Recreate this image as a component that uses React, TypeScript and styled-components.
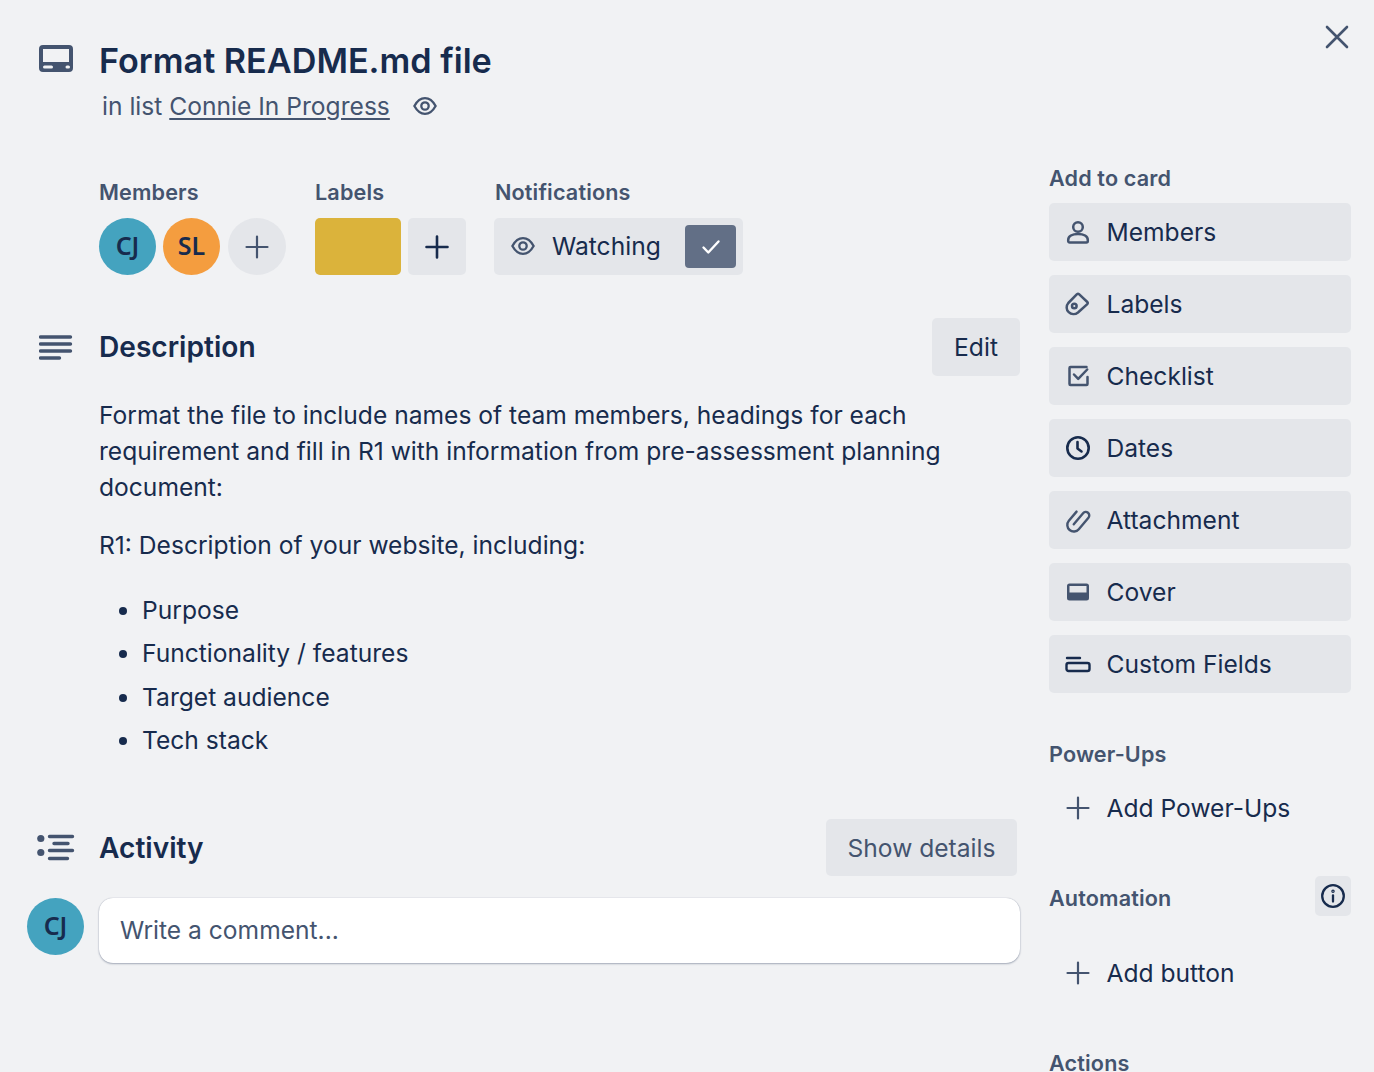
import React from 'react'
import styled, { createGlobalStyle } from 'styled-components'

const GlobalStyle = createGlobalStyle`
  html, body {
    margin: 0;
    height: 1072px;
    overflow: hidden;
    background: #f1f2f4;
  }
  body {
    font-family: Inter, "Noto Sans", sans-serif;
    color: #172b4d;
    -webkit-font-smoothing: antialiased;
  }
`

const Card = styled.div`
  position: relative;
  display: flex;
  height: 1072px;
  overflow: hidden;
`

const Main = styled.main`
  width: 1020px;
  flex: none;
  padding-top: 40px;
`

const Sidebar = styled.aside`
  width: 302px;
  flex: none;
  margin-left: 29px;
  padding-top: 166px;
`

const CloseButton = styled.button`
  position: absolute;
  top: 24px;
  right: 24px;
  width: 26px;
  height: 26px;
  padding: 0;
  border: 0;
  background: none;
  color: #44546f;
  display: flex;
`

const TitleRow = styled.div`
  display: flex;
  align-items: center;
  height: 40px;
  padding-left: 39px;
  gap: 26px;
`

const TitleIcon = styled.span`
  display: flex;
  margin-top: -4px;
`

const Title = styled.h1`
  margin: 0;
  padding-top: 1px;
  font-size: 34.2px;
  line-height: 40px;
  font-weight: 600;
  color: #172b4d;
`

const SubTitle = styled.div`
  display: flex;
  align-items: center;
  height: 36px;
  margin-top: 8px;
  padding-left: 102px;
  font-size: 24.6px;
  color: #44546f;
  gap: 23px;
`

const ListLink = styled.a`
  color: #44546f;
  text-decoration: underline;
  text-underline-offset: 3px;
`

const Meta = styled.div`
  display: flex;
  margin-top: 56px;
  padding-left: 99px;
`

const MetaGroup = styled.div<{ $width: number }>`
  width: ${({ $width }) => $width}px;
  flex: none;
`

const SmallHeading = styled.h3`
  margin: 0;
  font-size: 21.6px;
  line-height: 24px;
  font-weight: 600;
  letter-spacing: 0.15px;
  color: #44546f;
`

const MetaRow = styled.div`
  display: flex;
  margin-top: 14px;
  gap: 7px;
`

const Avatar = styled.div<{ $bg: string }>`
  width: 57px;
  height: 57px;
  box-sizing: border-box;
  padding-bottom: 3px;
  border-radius: 50%;
  flex: none;
  display: flex;
  align-items: center;
  justify-content: center;
  background: ${({ $bg }) => $bg};
  color: #172b4d;
  font-family: "Noto Sans", sans-serif;
  font-size: 25px;
  font-weight: 600;
`

const RoundAdd = styled.div`
  width: 58px;
  height: 57px;
  margin-left: 1px;
  border-radius: 50%;
  background: #e4e6ea;
  color: #44546f;
  display: flex;
  align-items: center;
  justify-content: center;
`

const LabelChip = styled.div`
  width: 86px;
  height: 57px;
  border-radius: 5px;
  background: #dbb33b;
`

const SquareAdd = styled.div`
  width: 58px;
  height: 57px;
  border-radius: 5px;
  background: #e4e6ea;
  color: #172b4d;
  display: flex;
  align-items: center;
  justify-content: center;
`

const WatchBox = styled.div`
  width: 249px;
  height: 57px;
  margin-left: -1px;
  box-sizing: border-box;
  padding: 0 7px 0 17px;
  border-radius: 5px;
  background: #e4e6ea;
  display: flex;
  align-items: center;
  font-size: 24.6px;
  color: #172b4d;
`

const WatchEye = styled.span`
  display: flex;
  margin-top: -2px;
  color: #44546f;
`

const WatchLabel = styled.span`
  margin-left: 17px;
  padding-bottom: 2px;
  flex: 1;
`

const CheckBox = styled.span`
  width: 51px;
  height: 43px;
  border-radius: 4px;
  background: #626f86;
  color: #fff;
  display: flex;
  align-items: center;
  justify-content: center;
`

const SectionHead = styled.div<{ $top: number }>`
  display: flex;
  align-items: center;
  height: 57px;
  margin-top: ${({ $top }) => $top}px;
`

const SectionIcon = styled.span<{ $left: number }>`
  width: ${({ $left }) => 99 - $left}px;
  margin-left: ${({ $left }) => $left}px;
  flex: none;
  display: flex;
`

const SectionTitle = styled.h2`
  margin: 0;
  flex: 1;
  font-size: 28.1px;
  font-weight: 600;
  color: #172b4d;
`

const GreyButton = styled.button<{ $width: number; $muted?: boolean }>`
  width: ${({ $width }) => $width}px;
  height: ${({ $muted }) => ($muted ? 57 : 58)}px;
  margin-right: ${({ $muted }) => ($muted ? 3 : 0)}px;
  border: 0;
  border-radius: 5px;
  background: #e4e6ea;
  color: ${({ $muted }) => ($muted ? '#44546f' : '#172b4d')};
  font: 400 24.6px Inter, sans-serif;
`

const Body = styled.div`
  margin-top: 22px;
  padding-left: 99px;
  font-size: 24.6px;
  line-height: 36px;
  color: #172b4d;
`

const Para = styled.p`
  margin: 0 0 22px;
`

const BulletList = styled.ul`
  margin: 29px 0 0;
  padding-left: 43px;
`

const Bullet = styled.li`
  margin-bottom: 7.4px;
`

const CommentRow = styled.div`
  display: flex;
  margin-top: 22px;
  padding-left: 27px;
  gap: 15px;
`

const CommentBox = styled.div`
  flex: 1;
  height: 65px;
  box-sizing: border-box;
  padding: 0 0 2px 21px;
  display: flex;
  align-items: center;
  border-radius: 14px;
  background: #fff;
  box-shadow: 0 1px 2px #091e4250, 0 0 1px #091e424f;
  font-size: 24.6px;
  color: #44546f;
`

const SideGroup = styled.div`
  display: flex;
  flex-direction: column;
  gap: 14.4px;
  margin-top: 13px;
`

const SideButton = styled.button`
  height: 57.6px;
  border: 0;
  padding: 0 0 0 16px;
  border-radius: 5px;
  background: #e4e6ea;
  color: #172b4d;
  display: flex;
  align-items: center;
  gap: 15.5px;
  font: 400 24.6px Inter, sans-serif;
`

const SideLink = styled(SideButton)<{ $top: number }>`
  background: none;
  width: 100%;
  margin-top: ${({ $top }) => $top}px;
`

const IconSlot = styled.span<{ $dark?: boolean }>`
  width: 26px;
  height: 26px;
  flex: none;
  display: flex;
  color: ${({ $dark }) => ($dark ? '#172b4d' : '#44546f')};
`

const SideHeading = styled(SmallHeading)<{ $top: number }>`
  margin-top: ${({ $top }) => $top}px;
`

const AutomationHead = styled.div`
  display: flex;
  align-items: center;
  justify-content: space-between;
  height: 40px;
  margin-top: 39px;
`

const AutomationTitle = styled(SmallHeading)`
  padding-top: 4px;
`

const InfoButton = styled.span`
  width: 36px;
  height: 40px;
  border-radius: 5px;
  background: #e4e6ea;
  color: #172b4d;
  display: flex;
  align-items: center;
  justify-content: center;
`

const CardIcon = () => (
  <svg width="34" height="27" viewBox="0 0 34 27" fill="#44546f">
    <path
      fillRule="evenodd"
      d="M4 0h26a4 4 0 0 1 4 4v19a4 4 0 0 1-4 4H4a4 4 0 0 1-4-4V4a4 4 0 0 1 4-4zm0 4v13h26V4H4zm1.500 16.500a1.500 1.500 0 0 0 0 3h7a1.500 1.500 0 0 0 0-3h-7zm22.500 0a1.500 1.500 0 0 0 0 3h1.500a1.500 1.500 0 0 0 0-3H28z"
    />
  </svg>
)

const EyeIcon = () => (
  <svg width="24" height="24" viewBox="0 0 26 26" fill="none" stroke="currentColor" strokeWidth="2.500">
    <path d="M1.500 13C4.500 7.500 8.500 4.500 13 4.500s8.500 3 11.500 8.500c-3 5.500-7 8.500-11.500 8.500S4.500 18.500 1.500 13z" />
    <circle cx="13" cy="13" r="4" />
  </svg>
)

const PlusIcon = ({ weight = 2.200 }: { weight?: number }) => (
  <svg width="26" height="26" viewBox="0 0 26 26" stroke="currentColor" strokeWidth={weight} strokeLinecap="round">
    <path d="M13 2.500v21M2.500 13h21" />
  </svg>
)

const CheckIcon = () => (
  <svg width="20" height="20" viewBox="0 0 20 20" fill="none" stroke="currentColor" strokeWidth="2.400" strokeLinecap="round" strokeLinejoin="round">
    <path d="M2.500 10.500l4.800 5L17.500 4.500" />
  </svg>
)

const CloseIcon = () => (
  <svg width="26" height="26" viewBox="0 0 26 26" stroke="currentColor" strokeWidth="2.600" strokeLinecap="round">
    <path d="M3 3l20 20M23 3L3 23" />
  </svg>
)

const DescriptionIcon = () => (
  <svg width="34" height="26" viewBox="0 0 34 26" stroke="#44546f" strokeWidth="3.400" strokeLinecap="round">
    <path d="M1.500 3h30M1.500 10h30M1.500 17h30M1.500 24h19" />
  </svg>
)

const ActivityIcon = () => (
  <svg width="38" height="28" viewBox="0 0 38 28" fill="#44546f">
    <circle cx="3.800" cy="4.500" r="3.600" />
    <circle cx="3.800" cy="18.500" r="3.600" />
    <path d="M12.500 2.500h23M17 9.500h14M12.500 16.500h23M12.500 24.500h18" stroke="#44546f" strokeWidth="3.400" strokeLinecap="round" />
  </svg>
)

const MemberIcon = () => (
  <svg width="26" height="26" viewBox="0 0 26 26" fill="none" stroke="currentColor" strokeWidth="2.500">
    <circle cx="13" cy="8" r="4.800" />
    <path d="M3.200 22v-1c0-3.600 4-6 9.800-6s9.800 2.400 9.800 6v1a1.500 1.500 0 0 1-1.500 1.500H4.700A1.500 1.500 0 0 1 3.200 22z" />
  </svg>
)

const LabelIcon = () => (
  <svg width="26" height="26" viewBox="0 0 26 26" fill="none" stroke="currentColor" strokeWidth="2.500" strokeLinejoin="round">
    <path d="M12 3.200a1.600 1.600 0 0 1 2 0l8.300 7.800a1.500 1.500 0 0 1 0 2.200L13 21.500c-2.800 2.300-6.800 2.100-9.300-.3-2.600-2.500-2.700-6.500-.4-9.200z" />
    <circle cx="9.300" cy="15" r="2.300" />
  </svg>
)

const ChecklistIcon = () => (
  <svg width="26" height="26" viewBox="0 0 26 26" fill="none" stroke="currentColor" strokeWidth="2.500" strokeLinecap="round" strokeLinejoin="round">
    <path d="M21.500 4H5.500a1 1 0 0 0-1 1v16a1 1 0 0 0 1 1h16a1 1 0 0 0 1-1v-7" />
    <path d="M9 11.500l4.200 4.300 9-9.300" />
  </svg>
)

const ClockIcon = () => (
  <svg width="26" height="26" viewBox="0 0 26 26" fill="none" stroke="currentColor" strokeWidth="2.600" strokeLinecap="round" strokeLinejoin="round">
    <circle cx="13" cy="13" r="10.700" />
    <path d="M12.500 7v6.500l4 3" />
  </svg>
)

const ClipIcon = () => (
  <svg width="26" height="26" viewBox="0 0 26 26" fill="none" stroke="currentColor" strokeWidth="2.400" strokeLinecap="round" strokeLinejoin="round">
    <g transform="rotate(40 13 13)">
      <path d="M6.500 7.500v12a6.500 6.500 0 0 0 13 0V4.500a3.500 3.500 0 0 0-7 0v14.500" />
    </g>
  </svg>
)

const CoverIcon = () => (
  <svg width="26" height="26" viewBox="0 0 26 26" fill="currentColor">
    <path
      fillRule="evenodd"
      d="M4.500 4.500h17a2.500 2.500 0 0 1 2.500 2.500v12a2.500 2.500 0 0 1-2.500 2.500h-17A2.500 2.500 0 0 1 2 19V7a2.500 2.500 0 0 1 2.500-2.500zM4.500 7v6.500h17V7h-17z"
    />
  </svg>
)

const FieldsIcon = () => (
  <svg width="26" height="26" viewBox="0 0 26 26" fill="none" stroke="currentColor" strokeWidth="2.400" strokeLinecap="round">
    <path d="M2 7h13" />
    <rect x="1.500" y="12" width="23" height="8" rx="2" />
  </svg>
)

const InfoIcon = () => (
  <svg width="26" height="26" viewBox="0 0 26 26" fill="none" stroke="currentColor" strokeWidth="2.300" strokeLinecap="round">
    <circle cx="13" cy="13" r="10.800" />
    <path d="M13 12.500v6" />
    <circle cx="13" cy="8.300" r="0.600" />
  </svg>
)

const addToCard = [
  { name: 'Members', icon: <MemberIcon /> },
  { name: 'Labels', icon: <LabelIcon /> },
  { name: 'Checklist', icon: <ChecklistIcon /> },
  { name: 'Dates', icon: <ClockIcon />, dark: true },
  { name: 'Attachment', icon: <ClipIcon /> },
  { name: 'Cover', icon: <CoverIcon /> },
  { name: 'Custom Fields', icon: <FieldsIcon />, dark: true },
]

const bullets = ['Purpose', 'Functionality / features', 'Target audience', 'Tech stack']

export default function App() {
  return (
    <>
      <GlobalStyle />
      <Card>
        <CloseButton aria-label="Close">
          <CloseIcon />
        </CloseButton>
        <Main>
          <TitleRow>
            <TitleIcon>
              <CardIcon />
            </TitleIcon>
            <Title>Format README.md file</Title>
          </TitleRow>
          <SubTitle>
            <span>
              in list <ListLink>Connie In Progress</ListLink>
            </span>
            <EyeIcon />
          </SubTitle>

          <Meta>
            <MetaGroup $width={216}>
              <SmallHeading>Members</SmallHeading>
              <MetaRow>
                <Avatar $bg="#44a3bf">CJ</Avatar>
                <Avatar $bg="#f49d3f">SL</Avatar>
                <RoundAdd>
                  <PlusIcon />
                </RoundAdd>
              </MetaRow>
            </MetaGroup>
            <MetaGroup $width={180}>
              <SmallHeading>Labels</SmallHeading>
              <MetaRow>
                <LabelChip />
                <SquareAdd>
                  <PlusIcon weight={2.6} />
                </SquareAdd>
              </MetaRow>
            </MetaGroup>
            <MetaGroup $width={249}>
              <SmallHeading>Notifications</SmallHeading>
              <MetaRow>
                <WatchBox>
                  <WatchEye>
                    <EyeIcon />
                  </WatchEye>
                  <WatchLabel>Watching</WatchLabel>
                  <CheckBox>
                    <CheckIcon />
                  </CheckBox>
                </WatchBox>
              </MetaRow>
            </MetaGroup>
          </Meta>

          <SectionHead $top={43}>
            <SectionIcon $left={39}>
              <DescriptionIcon />
            </SectionIcon>
            <SectionTitle>Description</SectionTitle>
            <GreyButton $width={88}>Edit</GreyButton>
          </SectionHead>
          <Body>
            <Para>
              Format the file to include names of team members, headings for each requirement and fill in R1 with
              information from pre-assessment planning document:
            </Para>
            <Para>R1: Description of your website, including:</Para>
            <BulletList>
              {bullets.map((item) => (
                <Bullet key={item}>{item}</Bullet>
              ))}
            </BulletList>
          </Body>

          <SectionHead $top={61}>
            <SectionIcon $left={37}>
              <ActivityIcon />
            </SectionIcon>
            <SectionTitle>Activity</SectionTitle>
            <GreyButton $width={191} $muted>
              Show details
            </GreyButton>
          </SectionHead>
          <CommentRow>
            <Avatar $bg="#44a3bf">CJ</Avatar>
            <CommentBox>Write a comment...</CommentBox>
          </CommentRow>
        </Main>

        <Sidebar>
          <SmallHeading>Add to card</SmallHeading>
          <SideGroup>
            {addToCard.map((item) => (
              <SideButton key={item.name}>
                <IconSlot $dark={item.dark}>{item.icon}</IconSlot>
                {item.name}
              </SideButton>
            ))}
          </SideGroup>

          <SideHeading $top={49}>Power-Ups</SideHeading>
          <SideLink $top={14}>
            <IconSlot>
              <PlusIcon />
            </IconSlot>
            Add Power-Ups
          </SideLink>

          <AutomationHead>
            <AutomationTitle>Automation</AutomationTitle>
            <InfoButton>
              <InfoIcon />
            </InfoButton>
          </AutomationHead>
          <SideLink $top={28}>
            <IconSlot>
              <PlusIcon />
            </IconSlot>
            Add button
          </SideLink>

          <SideHeading $top={49}>Actions</SideHeading>
        </Sidebar>
      </Card>
    </>
  )
}
